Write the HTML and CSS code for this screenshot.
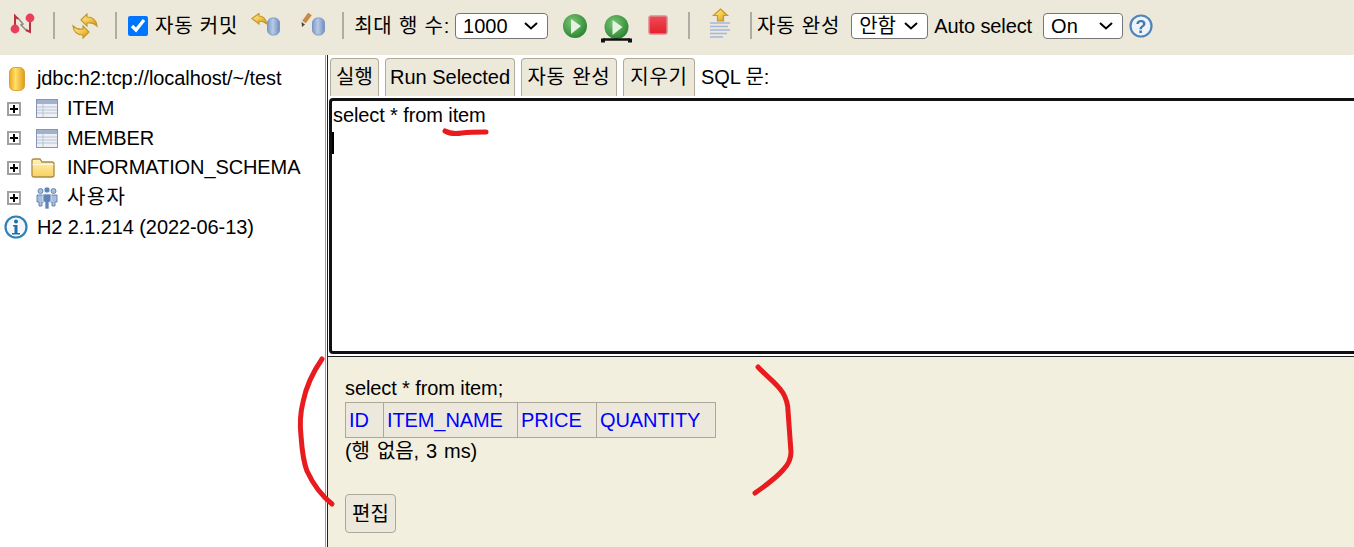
FILE: index.html
```html
<!DOCTYPE html>
<html lang="ko">
<head>
<meta charset="utf-8">
<title>H2 Console</title>
<link rel="stylesheet" href="styles.css">
</head>
<body>
<svg class="defs" width="0" height="0" aria-hidden="true">
  <defs>
    <linearGradient id="gold" x1="0" y1="0" x2="1" y2="1"><stop offset="0" stop-color="#fff0a8"/><stop offset=".55" stop-color="#f1c544"/><stop offset="1" stop-color="#c98f1a"/></linearGradient>
    <linearGradient id="dbBlue" x1="0" y1="0" x2="1" y2="0"><stop offset="0" stop-color="#7f9ccb"/><stop offset=".45" stop-color="#b8cbe6"/><stop offset="1" stop-color="#6f8dbf"/></linearGradient>
    <linearGradient id="dbGold" x1="0" y1="0" x2="1" y2="0"><stop offset="0" stop-color="#eaa81f"/><stop offset=".4" stop-color="#ffe06a"/><stop offset="1" stop-color="#e29a17"/></linearGradient>
    <radialGradient id="green" cx=".4" cy=".35" r=".75"><stop offset="0" stop-color="#7cc777"/><stop offset=".7" stop-color="#3c9440"/><stop offset="1" stop-color="#1f7a33"/></radialGradient>
    <linearGradient id="stopRed" x1="0" y1="0" x2="0" y2="1"><stop offset="0" stop-color="#ef4a55"/><stop offset="1" stop-color="#e61f2e"/></linearGradient>
    <linearGradient id="folder" x1="0" y1="0" x2="0" y2="1"><stop offset="0" stop-color="#fff3b8"/><stop offset="1" stop-color="#f8d060"/></linearGradient>
  </defs>
</svg>

<header class="toolbar">
  <svg class="ic ic-disc" width="26" height="26" viewBox="0 0 26 26">
    <path d="M8 5l5 6-2 1 6 6" fill="none" stroke="#8e8a86" stroke-width="1.500"/>
    <path d="M5 16V3l3 3M16 17l4 2V5" fill="none" stroke="#b8323c" stroke-width="2"/>
    <circle cx="5" cy="16" r="4.400" fill="#ea3f58"/>
    <circle cx="20" cy="5" r="4.400" fill="#ea3f58"/>
  </svg>
  <span class="sep sep-a"></span>
  <svg class="ic ic-refresh" width="26" height="26" viewBox="0 0 26 26">
    <path d="M9 7l6-6v3q9 0 10 9q-4-4-10-3v3z" fill="url(#gold)" stroke="#c4972f" stroke-width="1.200"/>
    <path d="M17 19l-6 6v-3q-9 0-10-9q4 4 10 3v-3z" fill="url(#gold)" stroke="#c4972f" stroke-width="1.200"/>
  </svg>
  <span class="sep sep-b"></span>
  <label class="check"><input type="checkbox" checked><span class="ko">자동 커밋</span></label>
  <svg class="ic ic-rollback" width="30" height="26" viewBox="0 0 30 26">
    <path d="M1 5.500L8 .5V3q6 0 8 8q-4-3-8-3v3z" fill="url(#gold)" stroke="#c4972f" stroke-width="1.200"/>
    <rect x="16.500" y="5" width="12" height="17" rx="5" fill="url(#dbBlue)" stroke="#7b97c4"/>
  </svg>
  <svg class="ic ic-commit" width="26" height="26" viewBox="0 0 26 26">
    <path d="M4 9l6-8" stroke="#c98a45" stroke-width="4.500"/>
    <path d="M1.500 9l3.500 2.500L2 14z" fill="#444"/>
    <rect x="12.500" y="5" width="12" height="17" rx="5" fill="url(#dbBlue)" stroke="#7b97c4"/>
  </svg>
  <span class="sep sep-c"></span>
  <label class="field field-rows"><span class="ko">최대 행 수:</span>
    <select class="sel sel-rows"><option>1000</option></select>
  </label>
  <svg class="ic ic-run" width="26" height="26" viewBox="0 0 26 26">
    <circle cx="13" cy="13" r="12" fill="url(#green)"/>
    <path d="M9 6l10 7-10 8z" fill="#e6f3e2"/>
  </svg>
  <svg class="ic ic-runsel" width="31" height="30" viewBox="0 0 31 30">
    <circle cx="15.500" cy="13" r="12" fill="url(#green)"/>
    <path d="M11.500 6l10 7-10 8z" fill="#e6f3e2"/>
    <path d="M2 25.500h27" stroke="#111" stroke-width="2.500"/>
    <path d="M0 24.500h4v4H0zM27 24.500h4v4h-4z" fill="#111"/>
  </svg>
  <svg class="ic ic-stop" width="20" height="20" viewBox="0 0 20 20">
    <rect x="1" y="1" width="18" height="18" rx="2" fill="url(#stopRed)" stroke="#d98b8f" stroke-width="1.500"/>
  </svg>
  <span class="sep sep-d"></span>
  <svg class="ic ic-history" width="24" height="30" viewBox="0 0 24 30">
    <path d="M12.500 1l7 6.500h-4V13h-6V7.500h-4z" fill="url(#gold)" stroke="#c4972f" stroke-width="1.200"/>
    <path d="M2 15h20M2 18.500h18M2 22h20M2 25.500h17M2 29h13" stroke="#a4b7dd" stroke-width="1.500"/>
  </svg>
  <span class="sep sep-e"></span>
  <label class="field field-complete"><span class="ko">자동 완성</span>
    <select class="sel sel-complete"><option>안함</option></select>
  </label>
  <label class="field field-auto"><span>Auto select</span>
    <select class="sel sel-auto"><option>On</option></select>
  </label>
  <svg class="ic ic-help" width="24" height="24" viewBox="0 0 24 24">
    <circle cx="12" cy="12" r="10.500" fill="#eef3fa" stroke="#4d86bd" stroke-width="2.200"/>
    <text class="help-mark" x="12" y="18.500">?</text>
  </svg>
</header>

<main class="main">
  <nav class="tree">
    <div class="node">
      <svg class="root-db" width="16" height="24" viewBox="0 0 16 24">
        <rect x=".5" y=".5" width="15" height="23" rx="5" fill="url(#dbGold)" stroke="#d9a03a"/>
      </svg>
      <span class="root-label">jdbc:h2:tcp://localhost/~/test</span>
    </div>
    <div class="node">
      <span class="plus"></span>
      <svg class="leaf" width="22" height="19" viewBox="0 0 22 19">
        <rect x=".5" y=".5" width="21" height="18" fill="#eef0f5" stroke="#8596b5"/>
        <path d="M1 1h20v4H1z" fill="#a3b2cc"/>
        <path d="M1 8h20M1 11h20M1 14h20M7 5v13" stroke="#b9c3d6"/>
      </svg>
      <span>ITEM</span>
    </div>
    <div class="node">
      <span class="plus"></span>
      <svg class="leaf" width="22" height="19" viewBox="0 0 22 19">
        <rect x=".5" y=".5" width="21" height="18" fill="#eef0f5" stroke="#8596b5"/>
        <path d="M1 1h20v4H1z" fill="#a3b2cc"/>
        <path d="M1 8h20M1 11h20M1 14h20M7 5v13" stroke="#b9c3d6"/>
      </svg>
      <span>MEMBER</span>
    </div>
    <div class="node">
      <span class="plus"></span>
      <svg class="leaf-folder" width="24" height="20" viewBox="0 0 24 20">
        <path d="M1 5V3q0-2 2-2h6l2 3h10q2 0 2 2v11q0 2-2 2H3q-2 0-2-2z" fill="url(#folder)" stroke="#ab8a42" stroke-width="1.300"/>
        <path d="M1.500 6.500h21" stroke="#fff8d8"/>
      </svg>
      <span>INFORMATION_SCHEMA</span>
    </div>
    <div class="node">
      <span class="plus"></span>
      <svg class="leaf" width="22" height="23" viewBox="0 0 22 23">
        <g fill="#a9bedd" stroke="#5d7eae" stroke-width=".9">
          <circle cx="4.500" cy="5" r="2.500"/><circle cx="17.500" cy="5" r="2.500"/>
          <path d="M1 9h7v7H6v4H3v-4H1zM14 9h7v7h-2v4h-3v-4h-2z"/>
        </g>
        <g fill="#5f83b6" stroke="#e6edf7" stroke-width=".8">
          <circle cx="11" cy="4" r="3"/>
          <path d="M7 8h8v8h-2v7H9v-7H7z"/>
        </g>
      </svg>
      <span class="users">사용자</span>
    </div>
    <div class="node">
      <svg class="root-info" width="24" height="24" viewBox="0 0 24 24">
        <circle cx="12" cy="12" r="10.500" fill="#f4f8fc" stroke="#2f7fb8" stroke-width="2.200"/>
        <circle cx="12" cy="6.500" r="2" fill="#1f6ea8"/>
        <path d="M9 10h4.500v8H16v1.500H8V18h2.500v-6.500H9z" fill="#1f6ea8"/>
      </svg>
      <span class="root-label">H2 2.1.214 (2022-06-13)</span>
    </div>
  </nav>

  <section class="query">
    <div class="actions">
      <button class="tab tab-run" type="button">실행</button>
      <button class="tab tab-sel" type="button">Run Selected</button>
      <button class="tab tab-auto ko" type="button">자동 완성</button>
      <button class="tab tab-clear ko" type="button">지우기</button>
      <span class="sql-label">SQL 문:</span>
    </div>
    <div class="editor">
      <div>select * from item</div>
      <div class="caret"></div>
    </div>
    <div class="result">
      <div class="echo">select * from item;</div>
      <table class="grid">
        <tr>
          <th class="col-id">ID</th>
          <th class="col-name">ITEM_NAME</th>
          <th class="col-price">PRICE</th>
          <th class="col-qty">QUANTITY</th>
        </tr>
      </table>
      <div class="status">(행 없음, 3 ms)</div>
      <button class="edit" type="button">편집</button>
    </div>
  </section>
</main>

<svg class="marks" width="1354" height="547" viewBox="0 0 1354 547" aria-hidden="true">
  <path d="M445 131c5 3 10 3 17 2 8-1 16-1 24-1"/>
  <path d="M322 359c-9 13-16 28-19 43-3 12-3 25-2 34 1 14 2 25 6 35 6 13 15 25 25 33"/>
  <path d="M758 367c8 9 19 16 25 26 4 7 5 12 5 18l3 41c0 7-2 12-8 18-7 8-18 16-28 23"/>
</svg>
</body>
</html>
```
FILE: styles.css
```css
* { box-sizing: border-box; }
html, body { height: 100%; }
body {
  margin: 0;
  overflow: hidden;
  position: relative;
  background: #fff;
  color: #000;
  font: 20px/23px "Liberation Sans", "Noto Sans CJK KR", sans-serif;
  letter-spacing: -.1px;
}
.defs { position: absolute; }
.ko { letter-spacing: .8px; }

/* toolbar */
.toolbar {
  display: flex;
  align-items: center;
  height: 55px;
  padding: 0 0 3px 10px;
  background: #ece8da;
  white-space: nowrap;
}
.ic { flex: none; filter: blur(.3px); }
.sep {
  flex: none;
  width: 2px;
  height: 27px;
  margin-top: -1px;
  background: #aeaca3;
}
.sep-a { margin-left: 17px; }
.ic-refresh { margin-left: 17px; }
.sep-b { margin-left: 17px; }
.check { display: flex; align-items: center; margin-left: 11px; }
.check input { width: 20px; height: 20px; margin: 0 7px 0 0; }
.ic-rollback { margin-left: 13px; }
.ic-commit { margin-left: 19px; }
.sep-c { margin-left: 16px; }
.field { display: flex; align-items: center; }
.field-rows { margin-left: 10px; }
.sel {
  appearance: none;
  height: 26px;
  padding: 0 0 0 7px;
  font: inherit;
  color: #000;
  background: #fff url("data:image/svg+xml,%3Csvg xmlns='http://www.w3.org/2000/svg' width='14' height='8'%3E%3Cpath d='M1 1l6 5.500L13 1' fill='none' stroke='%23000' stroke-width='2'/%3E%3C/svg%3E") no-repeat right 9px center;
  border: 1px solid #767676;
  border-radius: 4px;
}
.sel-rows { width: 93px; margin-left: 5px; }
.ic-run { margin-left: 14px; }
.ic-runsel { margin: 2.500px 0 -2.500px 13px; }
.ic-stop { margin: -3px 0 0 16px; }
.sep-d { margin-left: 20px; }
.ic-history { margin: -6px 0 0 18px; }
.sep-e { margin-left: 18px; }
.field-complete { margin-left: 5px; }
.sel-complete { width: 77px; margin-left: 11px; }
.field-auto { margin-left: 6px; }
.sel-auto { width: 80px; margin-left: 11px; }
.ic-help { margin-left: 6px; }
.help-mark { font: bold 18px "Liberation Sans", sans-serif; fill: #3f78b0; text-anchor: middle; }

/* main split */
.main { display: flex; height: 492px; }
.tree {
  flex: none;
  width: 326px;
  padding-top: 9px;
  border-right: 1px solid #9a9a9a;
}
.node { display: flex; align-items: center; height: 29.700px; white-space: nowrap; }
.users { letter-spacing: 1.300px; }
.plus {
  flex: none;
  position: relative;
  width: 14px;
  height: 14px;
  margin-left: 7px;
  border: 2px solid #a0a0a0;
  background:
    linear-gradient(#000, #000) center / 8px 2px no-repeat,
    linear-gradient(#000, #000) center / 2px 8px no-repeat,
    #fff;
}
.leaf { flex: none; margin: 0 9px 0 15px; filter: blur(.25px); }
.leaf-folder { flex: none; margin: 0 12px 0 10px; filter: blur(.25px); }
.root-db { flex: none; margin: 0 12px 0 9px; }
.root-info { flex: none; margin: 0 9px 0 4px; }

.query {
  flex: 1;
  min-width: 0;
  margin-left: 1px;
  border-left: 1px solid #222;
  display: flex;
  flex-direction: column;
}
.actions {
  display: flex;
  align-items: flex-start;
  height: 43px;
  padding: 3px 0 0 2px;
  white-space: nowrap;
}
.tab {
  height: 38px;
  margin-right: 6px;
  padding: 0;
  font: inherit;
  color: #000;
  background: #ece8da;
  border: 1px solid #b0ab9b;
  border-bottom: 0;
  border-radius: 4px 4px 0 0;
}
.tab-run { width: 49px; }
.tab-sel { width: 130px; }
.tab-auto { width: 96px; letter-spacing: .8px; }
.tab-clear { width: 72px; letter-spacing: .8px; }
.sql-label { line-height: 38px; }
.editor {
  flex: none;
  height: 256px;
  width: 1030px;
  margin-left: 1px;
  padding: 2px 0 0 1px;
  line-height: 24px;
  border: 3px solid #111;
  border-right: 0;
  border-radius: 4px 0 0 4px;
}
.caret { width: 2px; height: 22px; margin: 5px 0 0 -1px; background: #000; }
.result {
  flex: 1;
  margin-top: 2px;
  padding: 20px 0 0 17px;
  background: #f2efde;
  border-top: 1px solid #222;
}
.echo { height: 25px; }
.grid { border-collapse: collapse; width: 370px; table-layout: fixed; }
.grid th {
  height: 35px;
  padding: 1px 0 0 3px;
  font-weight: 400;
  text-align: left;
  color: #00f;
  background: #ece9dc;
  border: 1px solid #aca899;
}
.col-id { width: 38px; }
.col-name { width: 134px; }
.col-price { width: 79px; }
.col-qty { width: 119px; }
.status { margin-top: 1px; line-height: 24px; word-spacing: 1.600px; }
.edit {
  display: block;
  width: 51px;
  height: 39px;
  margin-top: 31px;
  padding: 1px 0 0;
  font: inherit;
  color: #000;
  background: #ece9dc;
  border: 1px solid #aca899;
  border-radius: 4px;
}

/* hand-drawn red annotations lying over the page */
.marks { position: absolute; left: 0; top: 0; pointer-events: none; }
.marks path { fill: none; stroke: #e81c1f; stroke-width: 5px; stroke-linecap: round; }
```
